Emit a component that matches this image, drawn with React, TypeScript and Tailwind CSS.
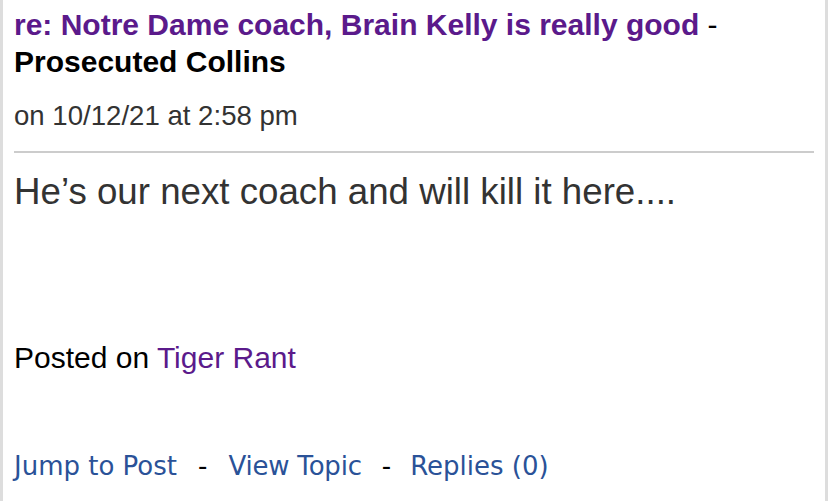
import React from "react";

export default function App() {
  return (
    <div className="w-[828px] h-[501px] bg-white overflow-hidden">
      <div className="h-full border-x-[3px] border-[#dddddd] px-[11px] pt-[6px] font-['Liberation_Sans',Arial,sans-serif]">
        <div className="text-[30px] leading-[37px] font-bold text-black">
          <span className="text-[#5b1a8b]">re: Notre Dame coach, Brain Kelly is really good</span>
          <span className="font-normal"> - </span>
          <br />
          <span>Prosecuted Collins</span>
        </div>
        <div className="mt-[20px] text-[27.6px] leading-[32px] text-[#333333]">on 10/12/21 at 2:58 pm</div>
        <div className="mt-[19px] h-[2px] bg-[#cccccc]" />
        <div className="mt-[17px] text-[36.7px] leading-[44px] text-[#333333]">
          He’s our next coach and will kill it here....
        </div>
        <div className="mt-[126px] text-[30px] leading-[36px] text-black">
          Posted on <span className="text-[#5b1a8b]">Tiger Rant</span>
        </div>
        <div className="mt-[75px] flex items-baseline text-[26px] leading-[30px] font-['DejaVu_Sans',Verdana,sans-serif] text-black whitespace-pre">
          <span className="text-[#2a5298]">Jump to Post</span>
          <span className="ml-[21px] mr-[21px]">-</span>
          <span className="text-[#2a5298] tracking-[-0.2px]">View Topic</span>
          <span className="ml-[20px] mr-[19px]">-</span>
          <span className="text-[#2a5298]">Replies (0)</span>
        </div>
      </div>
    </div>
  );
}
